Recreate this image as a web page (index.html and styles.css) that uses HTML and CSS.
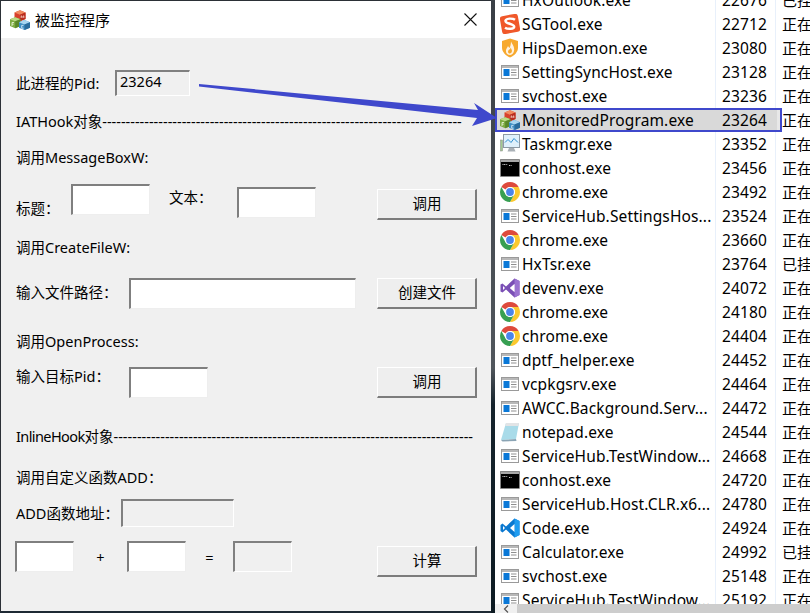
FILE: index.html
```html
<!DOCTYPE html>
<html lang="zh">
<head>
<meta charset="utf-8">
<title>被监控程序</title>
<link rel="stylesheet" href="styles.css">
</head>
<body>
<svg class="defs" width="0" height="0" aria-hidden="true">
  <defs>
    <symbol id="i-mfc" viewBox="0 0 20 20">
      <path d="M4.500 2.500L10 .3l5.500 2.200v6.500L10 11.300 4.500 9z" fill="#d8402c"/>
      <path d="M4.500 2.500L10 4.700l5.500-2.200L10 .3z" fill="#f08a60"/>
      <path d="M10 4.700v6.600L15.500 9V2.500z" fill="#b92c1e"/>
      <path d="M0 9.200l5.200-2 5.300 2v6.800l-5.300 2.200L0 16z" fill="#7dab40"/>
      <path d="M0 9.200l5.200 2.100 5.300-2.100-5.300-2z" fill="#bcd884"/>
      <path d="M5.200 11.300v6.900l5.300-2.200V9.200z" fill="#5a8828"/>
      <path d="M9 12.200l5.500-2.200 5.500 2.200v5.600L14.500 20 9 17.800z" fill="#3f8fc4"/>
      <path d="M9 12.200l5.500 2.200 5.500-2.200-5.500-2.200z" fill="#a8d6f0"/>
      <path d="M14.500 14.400V20l5.500-2.200v-5.600z" fill="#2a6c9c"/>
      <path d="M11.200 8V5.800l1.300 1.200 1.300-1.200V8" stroke="#fbe3d8" stroke-width=".8" fill="none"/>
      <path d="M2 16v-3.500h2M2 14.200h1.600" stroke="#f0f7de" stroke-width=".8" fill="none"/>
      <path d="M13.500 15.400h-1.800v2.800h1.800" stroke="#e6f3fb" stroke-width=".8" fill="none"/>
    </symbol>
    <symbol id="i-app" viewBox="0 0 20 20">
      <rect x="1.500" y="3.500" width="17" height="13" fill="#fff" stroke="#9a9a9a"/>
      <rect x="2" y="4" width="16" height="2" fill="#b8b8b8"/>
      <rect x="3.500" y="7" width="6" height="7" fill="#0a78d7"/>
      <path d="M11 8h5.500M11 10.500h5.500M11 13h5.500" stroke="#8f8f8f"/>
    </symbol>
    <symbol id="i-chrome" viewBox="2 2 20 20">
      <path d="M3.340 7A10 10 0 0 1 20.660 7H12a5 5 0 0 0-4.330 2.500z" fill="#de4a3c"/>
      <path d="M20.660 7A10 10 0 0 1 12 22l4.330-7.500A5 5 0 0 0 12 7z" fill="#fbc92e"/>
      <path d="M3.340 7A10 10 0 0 0 12 22l4.330-7.500a5 5 0 0 1-8.660 0z" fill="#379f52"/>
      <circle cx="12" cy="12" r="5" fill="#fff"/>
      <circle cx="12" cy="12" r="3.900" fill="#4a85ea"/>
    </symbol>
    <symbol id="i-console" viewBox="0 0 20 20">
      <rect x="0.500" y="1.500" width="19" height="17" fill="#000" stroke="#8a8a8a" stroke-width=".6"/>
      <rect x="1" y="2" width="18" height="2" fill="#a8a8a8"/>
      <path d="M2.500 6.500h5M9 7.500h3" stroke="#c8c8c8" stroke-width="1" stroke-dasharray="1 .6"/>
    </symbol>
    <symbol id="i-sg" viewBox="1 1 18 18">
      <rect x="1.800" y="1.800" width="16.400" height="16.400" rx="2.500" fill="#f0582a" transform="rotate(-10 10 10)"/>
      <path d="M14.500 6.200C13 5 7 4.400 6 6.800c-1 3 7.800 2.800 7.800 5.700 0 2.200-6 2.300-8.300.8" fill="none" stroke="#fff" stroke-width="2.200"/>
    </symbol>
    <symbol id="i-hips" viewBox="0 0 20 20">
      <path d="M10 .5l8 2.500v6.500c0 4.500-3.500 8-8 10-4.500-2-8-5.500-8-10V3z" fill="#f7a92e"/>
      <path d="M11 3.500c1 3 4 5 3 9.500-.5 2.500-2.500 4-4 4-2.500 0-4.500-2-4-5 .3-1.500 1.500-2.500 2-4 .5 1 1 1.500 1.500 2 .8-1.500 1.500-4 1.500-6.500z" fill="#fff3e2"/>
      <path d="M10.500 9.500c.8 1.500 1.800 2.500 1.300 4.300-.3 1-1.200 1.700-2 1.700-1.200 0-2-1-1.700-2.300.3-1 1-1.300 1.300-2.200.2.300.4.500.6.700z" fill="#f7a92e"/>
    </symbol>
    <symbol id="i-task" viewBox="0 0 20 20">
      <rect x="3.500" y=".5" width="16" height="13" fill="#dff0fb" stroke="#8d9aa5"/>
      <path d="M5 8.500l3-3 3 3 3-4 4 4" fill="none" stroke="#2f8fd0" stroke-width="1"/>
      <path d="M9 14h5l1.500 3.500h-8z" fill="#a9b0b6"/>
      <rect x="0.500" y="6" width="2" height="11" fill="#9fc98e" stroke="#888" stroke-width=".5"/>
    </symbol>
    <symbol id="i-vs" viewBox="0 0 20 20">
      <path d="M14.500 0.500L19.500 3v14l-5 2.500L6 11.500 2.500 14.500 0.500 13.500v-7l2-1L6 8.500zM14.500 6L10 10l4.500 4zM3 8v4l2-2z" fill="#7a4fb5" fill-rule="evenodd"/>
      <path d="M14.500 0.500L19.500 3v14l-5 2.500z" fill="#9a72d0"/>
      <path d="M14.500 6L10 10l4.500 4z" fill="#fff"/>
    </symbol>
    <symbol id="i-code" viewBox="0 0 20 20">
      <path d="M14.500 0.500L19.500 3v14l-5 2.500L6 11.500 2.500 14.500 0.500 13v-6l2-1.500L6 8.500z" fill="#0a78d0"/>
      <path d="M14.500 0.500L19.500 3v14l-5 2.500z" fill="#1f9cf0"/>
      <path d="M14.500 6L10 10l4.500 4z" fill="#fff"/>
      <path d="M3 8v4l2-2z" fill="#fff"/>
    </symbol>
    <symbol id="i-note" viewBox="0 0 20 20">
      <path d="M6 1h13l-3 16-15 1z" fill="#a9dbe9"/>
      <path d="M6 1h13l-.5 3H5.200z" fill="#e2e4e6"/>
      <path d="M1 18l15-1 .5 2-14 .5z" fill="#8aa4b4"/>
    </symbol>
  </defs>
</svg>

<div class="screen">
  <section class="window">
    <header class="titlebar">
      <svg class="title-icon"><use href="#i-mfc"/></svg>
      <span class="title-text">被监控程序</span>
      <svg class="close" viewBox="0 0 13 13"><path d="M0.500 0.500l12 12M12.500 0.500l-12 12"/></svg>
    </header>
    <div class="form">
      <div class="row row-pid">
        <label class="lbl w-pid">此进程的Pid:</label>
        <div class="field ro w-75 h-26 value">23264</div>
      </div>
      <div class="line mt-15">IATHook对象-----------------------------------------------------------------------------</div>
      <div class="line mt-16">调用MessageBoxW:</div>
      <div class="row row-msg">
        <label class="lbl w-55 lo-13">标题：</label>
        <div class="field w-79 h-31"></div>
        <label class="lbl ml-18 w-69 lo-3">文本：</label>
        <div class="field w-79 h-31 lo-3"></div>
        <button class="btn ml-61 lo-5">调用</button>
      </div>
      <div class="line mt-17">调用CreateFileW:</div>
      <div class="row row-file">
        <label class="lbl w-113 lo-4">输入文件路径：</label>
        <div class="field w-227 h-31"></div>
        <button class="btn ml-21">创建文件</button>
      </div>
      <div class="line mt-22">调用OpenProcess:</div>
      <div class="row row-open">
        <label class="lbl w-113 lo-up">输入目标Pid：</label>
        <div class="field w-79 h-31"></div>
        <button class="btn ml-169">调用</button>
      </div>
      <div class="line mt-28"><span class="tight">InlineHook</span>对象-----------------------------------------------------------------------------</div>
      <div class="line mt-21">调用自定义函数ADD：</div>
      <div class="row row-addr">
        <label class="lbl w-105 lo-4">ADD函数地址：</label>
        <div class="field ro w-113 h-28"></div>
      </div>
      <div class="row row-calc">
        <div class="field w-59 h-31"></div>
        <span class="op w-53 lo-6">+</span>
        <div class="field w-59 h-31"></div>
        <span class="op w-47 lo-6">=</span>
        <div class="field ro w-59 h-31"></div>
        <button class="btn ml-85 lo-5">计算</button>
      </div>
    </div>
  </section>

  <div class="divider"></div>

  <section class="list">
    <div class="rows">
      <div class="item"><svg class="ico"><use href="#i-app"/></svg><span class="name">HxOutlook.exe</span><span class="pid">22676</span><span class="state">已挂起</span></div>
      <div class="item"><svg class="ico"><use href="#i-sg"/></svg><span class="name">SGTool.exe</span><span class="pid">22712</span><span class="state">正在运行</span></div>
      <div class="item"><svg class="ico"><use href="#i-hips"/></svg><span class="name">HipsDaemon.exe</span><span class="pid">23080</span><span class="state">正在运行</span></div>
      <div class="item"><svg class="ico"><use href="#i-app"/></svg><span class="name">SettingSyncHost.exe</span><span class="pid">23128</span><span class="state">正在运行</span></div>
      <div class="item"><svg class="ico"><use href="#i-app"/></svg><span class="name">svchost.exe</span><span class="pid">23236</span><span class="state">正在运行</span></div>
      <div class="item selected"><svg class="ico"><use href="#i-mfc"/></svg><span class="name">MonitoredProgram.exe</span><span class="pid">23264</span><span class="state">正在运行</span></div>
      <div class="item"><svg class="ico"><use href="#i-task"/></svg><span class="name">Taskmgr.exe</span><span class="pid">23352</span><span class="state">正在运行</span></div>
      <div class="item"><svg class="ico"><use href="#i-console"/></svg><span class="name">conhost.exe</span><span class="pid">23456</span><span class="state">正在运行</span></div>
      <div class="item"><svg class="ico"><use href="#i-chrome"/></svg><span class="name">chrome.exe</span><span class="pid">23492</span><span class="state">正在运行</span></div>
      <div class="item"><svg class="ico"><use href="#i-app"/></svg><span class="name">ServiceHub.SettingsHos...</span><span class="pid">23524</span><span class="state">正在运行</span></div>
      <div class="item"><svg class="ico"><use href="#i-chrome"/></svg><span class="name">chrome.exe</span><span class="pid">23660</span><span class="state">正在运行</span></div>
      <div class="item"><svg class="ico"><use href="#i-app"/></svg><span class="name">HxTsr.exe</span><span class="pid">23764</span><span class="state">已挂起</span></div>
      <div class="item"><svg class="ico"><use href="#i-vs"/></svg><span class="name">devenv.exe</span><span class="pid">24072</span><span class="state">正在运行</span></div>
      <div class="item"><svg class="ico"><use href="#i-chrome"/></svg><span class="name">chrome.exe</span><span class="pid">24180</span><span class="state">正在运行</span></div>
      <div class="item"><svg class="ico"><use href="#i-chrome"/></svg><span class="name">chrome.exe</span><span class="pid">24404</span><span class="state">正在运行</span></div>
      <div class="item"><svg class="ico"><use href="#i-app"/></svg><span class="name">dptf_helper.exe</span><span class="pid">24452</span><span class="state">正在运行</span></div>
      <div class="item"><svg class="ico"><use href="#i-app"/></svg><span class="name">vcpkgsrv.exe</span><span class="pid">24464</span><span class="state">正在运行</span></div>
      <div class="item"><svg class="ico"><use href="#i-app"/></svg><span class="name">AWCC.Background.Serv...</span><span class="pid">24472</span><span class="state">正在运行</span></div>
      <div class="item"><svg class="ico"><use href="#i-note"/></svg><span class="name">notepad.exe</span><span class="pid">24544</span><span class="state">正在运行</span></div>
      <div class="item"><svg class="ico"><use href="#i-app"/></svg><span class="name">ServiceHub.TestWindow...</span><span class="pid">24668</span><span class="state">正在运行</span></div>
      <div class="item"><svg class="ico"><use href="#i-console"/></svg><span class="name">conhost.exe</span><span class="pid">24720</span><span class="state">正在运行</span></div>
      <div class="item"><svg class="ico"><use href="#i-app"/></svg><span class="name">ServiceHub.Host.CLR.x6...</span><span class="pid">24780</span><span class="state">正在运行</span></div>
      <div class="item"><svg class="ico"><use href="#i-code"/></svg><span class="name">Code.exe</span><span class="pid">24924</span><span class="state">正在运行</span></div>
      <div class="item"><svg class="ico"><use href="#i-app"/></svg><span class="name">Calculator.exe</span><span class="pid">24992</span><span class="state">已挂起</span></div>
      <div class="item"><svg class="ico"><use href="#i-app"/></svg><span class="name">svchost.exe</span><span class="pid">25148</span><span class="state">正在运行</span></div>
      <div class="item"><svg class="ico"><use href="#i-app"/></svg><span class="name">ServiceHub.TestWindow...</span><span class="pid">25192</span><span class="state">正在运行</span></div>
    </div>
    <div class="hscroll">
      <div class="hscroll-btn"><svg viewBox="0 0 6 8" width="6" height="8"><path d="M5 0.500L1.500 4 5 7.500" fill="none" stroke="#555" stroke-width="1.200"/></svg></div>
      <div class="hscroll-thumb"></div>
    </div>
  </section>

  <svg class="arrow" width="810" height="613" viewBox="0 0 810 613" aria-hidden="true">
    <path d="M199 84L478 110 474 103 497 118 472 126 477 118 199 86.500z"/>
  </svg>
</div>
</body>
</html>
```

FILE: styles.css
```css
*, *::after { box-sizing: border-box; }
html, body { margin: 0; height: 613px; overflow: hidden; background: #fff; }
body { font-family: "Noto Sans", "Noto Sans CJK TC", sans-serif; color: #000; }
.defs { position: absolute; }

.screen { position: relative; display: flex; width: 810px; height: 613px; overflow: hidden; }

/* dialog */
.window {
  flex: 0 0 491px; height: 613px;
  display: flex; flex-direction: column;
  background: #f0f0f0;
  border-top: 1px solid #2b3036;
  border-left: 1px solid #2b3036;
  border-bottom: 2px solid #1d2933;
}
.titlebar {
  flex: 0 0 37px; display: flex; align-items: center;
  background: #fff; padding: 0 14px 0 9px;
}
.title-icon { width: 20px; height: 20px; }
.title-text { margin-left: 5px; font-size: 15px; line-height: 20px; }
.close { width: 13px; height: 13px; margin-left: auto; }
.close path { stroke: #111; stroke-width: 1.100; fill: none; }

.form { flex: 1; display: flex; flex-direction: column; padding-left: 14px; font-size: 14.500px; }
.line { height: 20px; line-height: 20px; padding-left: 1px; white-space: nowrap; flex: none; }
.tight { letter-spacing: -0.6px; }
.row { display: flex; align-items: flex-start; flex: none; }
.lbl, .op { height: 20px; line-height: 20px; white-space: nowrap; flex: none; }
.lbl { padding-left: 1px; }
.op { text-align: center; }

.row-pid { margin-top: 32px; height: 26px; align-items: center; }
.row-msg { margin-top: 17px; height: 36px; }
.row-file { margin-top: 21px; height: 31px; }
.row-open { margin-top: 16px; height: 31px; }
.row-addr { margin-top: 12px; height: 28px; }
.row-calc { margin-top: 14px; height: 36px; }

.mt-15 { margin-top: 15px; }
.mt-16 { margin-top: 16px; }
.mt-17 { margin-top: 17px; }
.mt-21 { margin-top: 21px; }
.mt-22 { margin-top: 22px; }
.mt-28 { margin-top: 28px; }
.lo-up { margin-top: -1px; }
.lo-3 { margin-top: 3px; }
.lo-4 { margin-top: 4px; }
.lo-5 { margin-top: 5px; }
.lo-6 { margin-top: 6px; }
.lo-13 { margin-top: 14px; }
.ml-18 { margin-left: 18px; }
.ml-21 { margin-left: 21px; }
.ml-61 { margin-left: 61px; }
.ml-85 { margin-left: 85px; }
.ml-169 { margin-left: 169px; }

.w-pid { width: 100px; }
.w-47 { width: 47px; }
.w-53 { width: 53px; }
.w-55 { width: 56px; }
.w-59 { width: 59px; flex: none; }
.w-69 { width: 69px; }
.w-75 { width: 75px; flex: none; }
.w-79 { width: 79px; flex: none; }
.w-105 { width: 106px; }
.w-113 { width: 114px; }
.w-227 { width: 227px; flex: none; }
.row-addr .w-113 { width: 113px; }
.h-26 { height: 26px; }
.h-28 { height: 28px; }
.h-31 { height: 31px; }

.field {
  background: #fff;
  border-style: solid;
  border-width: 2px 1px 1px 2px;
  border-color: #7f7f7f #eeeeee #eeeeee #7f7f7f;
  flex: none;
}
.field.ro { background: #f0f0f0; border-color: #808080 #fff #fff #808080; }
.value { font-size: 14.500px; line-height: 19px; padding-left: 3px; }

.btn {
  flex: none; width: 100px; height: 31px; padding: 0 0 4px 1px;
  font: inherit; color: #000; text-align: center;
  background: #eeeeee;
  border-style: solid;
  border-width: 1px 2px 2px 1px;
  border-color: #fff #7c7c7c #7c7c7c #fff;
}

/* desktop strip between the windows */
.divider { flex: 0 0 4px; height: 613px; background: linear-gradient(#3a3f46 0, #50565c 60%, #15232c 66%, #0c1a22 100%); }

/* process list */
.list { flex: 1; height: 613px; position: relative; overflow: hidden; background: #fff; }
.rows { margin-top: -12px; font-size: 15.500px; }
.item { display: flex; align-items: center; height: 24px; white-space: nowrap; }
.ico { flex: none; width: 20px; height: 20px; margin-left: 5px; }
.name { flex: none; width: 196px; padding-left: 2px; letter-spacing: .13px; line-height: 24px; height: 24px; border-right: 1px solid #e8f0fb; overflow: hidden; }
.pid { flex: none; width: 60px; padding-left: 6px; letter-spacing: .13px; line-height: 24px; height: 24px; border-right: 1px solid #e8f0fb; }
.state { flex: none; padding-left: 6px; font-size: 15px; line-height: 24px; }
.item.selected { position: relative; background: linear-gradient(90deg, #d9d9d9 282px, #e8e8e8 282px); background-size: 287px 100%; background-repeat: no-repeat; }
.item.selected::after {
  content: ""; position: absolute; left: 0; top: 0; width: 287px; height: 24px;
  border: 2px solid #3f48cc;
}
.item.selected .name, .item.selected .pid { border-right-color: transparent; }

.hscroll {
  position: absolute; left: 0; right: 0; bottom: 0; height: 9px;
  display: flex; background: #f0f0f0;
}
.hscroll-btn { width: 22px; display: flex; align-items: center; justify-content: center; }
.hscroll-thumb { flex: 1; background: #cdcdcd; }

.arrow { position: absolute; left: 0; top: 0; pointer-events: none; }
.arrow path { fill: #3f48cc; }
```
